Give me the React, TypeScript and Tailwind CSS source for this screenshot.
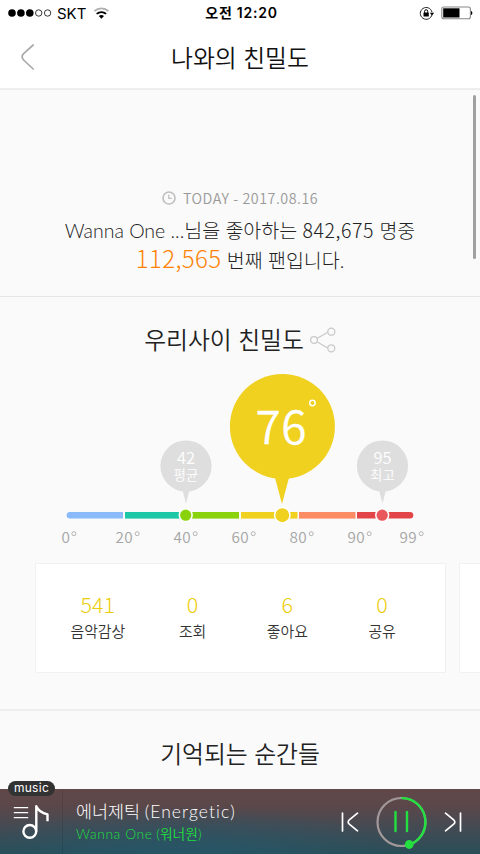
import type { ReactNode } from 'react';

interface TickProps {
  x: number;
  label: string;
}

interface BalloonProps {
  x: number;
  value: string;
  label: string;
}

const SEGMENTS = [
  { x: 125, width: 57, color: '#1cc7a7' },
  { x: 183, width: 56, color: '#8ad20b' },
  { x: 241, width: 56.5, color: '#f0d11f' },
  { x: 299, width: 56.5, color: '#fb8c64' },
];

const TICKS: TickProps[] = [
  { x: 61.5, label: '0' },
  { x: 115.5, label: '20' },
  { x: 173.5, label: '40' },
  { x: 231.5, label: '60' },
  { x: 289.5, label: '80' },
  { x: 347.5, label: '90' },
  { x: 399.5, label: '99' },
];

const STATS = [
  { value: '541', label: '음악감상' },
  { value: '0', label: '조회' },
  { value: '6', label: '좋아요' },
  { value: '0', label: '공유' },
];

function StatusBar() {
  return (
    <div className="grid h-[26px] grid-cols-3 items-center px-2 text-black">
      <div className="flex items-center">
        <svg width="44" height="10" viewBox="0 0 44 10">
          <circle cx="4" cy="5" r="3.8" />
          <circle cx="12.9" cy="5" r="3.8" />
          <circle cx="21.8" cy="5" r="3.8" />
          <circle cx="30.7" cy="5" r="3.2" fill="none" stroke="#222" strokeWidth="0.9" />
          <circle cx="39.6" cy="5" r="3.2" fill="none" stroke="#222" strokeWidth="0.9" />
        </svg>
        <span className="ml-[5px] font-['Inter',sans-serif] text-[15px] leading-none">SKT</span>
        <svg className="ml-[7px]" width="17" height="12" viewBox="0 0 17 12" fill="none">
          <path d="M1.3 4.2a10.3 10.3 0 0 1 14.2 0" stroke="#b0b0b0" strokeWidth="1.8" />
          <path d="M3.7 6.9a7 7 0 0 1 9.4 0" stroke="#000" strokeWidth="1.9" />
          <path d="M5.8 9a4 4 0 0 1 5.2 0L8.4 11.8z" fill="#000" />
        </svg>
      </div>
      <div className="pl-[3px] text-center font-['Inter','Noto_Sans_CJK_KR',sans-serif] text-[14px] leading-none font-semibold tracking-[0.75px] whitespace-nowrap">
        오전 12:20
      </div>
      <div className="flex items-center justify-end">
        <svg width="16" height="15" viewBox="0 0 16 15" fill="none">
          <path d="M13 8.6a5.9 5.9 0 1 1 0-2.4" stroke="#222" strokeWidth="1" />
          <path d="M10.8 6.8h4.4L13 9.4z" fill="#000" />
          <rect x="4.5" y="6.6" width="5.3" height="4" rx="0.4" fill="#000" />
          <path d="M5.6 7V5.3a1.55 1.55 0 0 1 3.1 0V7" stroke="#000" strokeWidth="1" />
        </svg>
        <svg className="-mr-px ml-[6px]" width="32" height="14" viewBox="0 0 32 14">
          <rect x="0.8" y="1" width="28.6" height="11.8" rx="2" fill="none" stroke="#888" strokeWidth="1.1" />
          <rect x="2.2" y="2.3" width="16.3" height="9.2" fill="#000" />
          <path d="M30 5c1.8.3 1.8 3.7 0 4z" fill="#000" />
        </svg>
      </div>
    </div>
  );
}

function Header() {
  return (
    <header className="h-[90px] shrink-0 border-b-2 border-[#eee] bg-white">
      <StatusBar />
      <div className="grid h-[62px] grid-cols-[60px_1fr_60px] items-center">
        <svg className="ml-[20px]" width="16" height="28" viewBox="0 0 16 28" fill="none">
          <path d="M13.2 2 3.6 10.7Q0.6 13.8 3.6 17L13.2 26" stroke="#aaa" strokeWidth="1.7" strokeLinecap="round" />
        </svg>
        <h1 className="pt-[3px] text-center text-[23.8px] leading-none font-[350] text-[#111]">나와의 친밀도</h1>
      </div>
    </header>
  );
}

function RankSummary() {
  return (
    <section className="flex h-[207px] shrink-0 flex-col items-center border-b border-[#e6e6e6] pt-[99px] text-[#222]">
      <div className="flex h-[18px] items-center gap-[7px] text-[#999]">
        <svg width="14" height="14" viewBox="0 0 14 14" fill="none" stroke="#c0c0c0" strokeWidth="1.7">
          <circle cx="7" cy="7" r="6" />
          <path d="M6.8 3.7v3.7h3" strokeWidth="1.3" />
        </svg>
        <span className="font-['Noto_Sans_CJK_KR',sans-serif] text-[14.3px] leading-none font-[350] tracking-[0.52px]">
          TODAY - 2017.08.16
        </span>
      </div>
      <p className="mt-[8px] h-[31px] text-[19.5px] leading-[30px] font-light whitespace-nowrap">
        Wanna One ...님을 좋아하는{' '}
        <span className="font-['Noto_Sans_CJK_KR',sans-serif] tracking-[0.6px]">842,675</span> 명중
      </p>
      <p className="h-[30px] text-[19.5px] leading-[29px] font-light whitespace-nowrap">
        <span className="font-['Noto_Sans_CJK_KR',sans-serif] text-[24px] leading-[20px] tracking-[0.4px] text-[#ff8205]">
          112,565
        </span>{' '}
        번째 팬입니다.
      </p>
    </section>
  );
}

function Balloon({ x, value, label }: BalloonProps) {
  return (
    <g fill="#dedede">
      <circle cx={x} cy="96" r="25.6" />
      <path d={`M${x - 4} 118h8L${x} 133.8z`} />
      <text x={x} y="93.5" textAnchor="middle" fontSize="16.5" fill="#fff">{value}</text>
      <text x={x} y="110" textAnchor="middle" fontSize="13.5" fill="#fff">{label}</text>
    </g>
  );
}

function Gauge() {
  return (
    <svg
      className="block font-['Noto_Sans_CJK_KR',sans-serif] font-[350]"
      width="480"
      height="182"
      viewBox="0 0 480 182"
    >
      <path d="M123 142H70a3.3 3.3 0 0 0 0 6.6h53z" fill="#8abafa" />
      {SEGMENTS.map((segment) => (
        <rect key={segment.x} x={segment.x} y="142" width={segment.width} height="6.6" fill={segment.color} />
      ))}
      <path d="M357 142h53a3.3 3.3 0 0 1 0 6.6h-53z" fill="#e14548" />

      <Balloon x={186} value="42" label="평균" />
      <Balloon x={382.5} value="95" label="최고" />

      <g fill="#f0d11f">
        <circle cx="282.4" cy="56.4" r="52.5" />
        <path d="M274.8 107h14.4L282 134z" />
      </g>
      <text x="281.3" y="73.7" textAnchor="middle" fontSize="46" letterSpacing="0.5" fill="#fff" stroke="#fff" strokeWidth="0.3">
        76
      </text>
      <circle cx="312.4" cy="33" r="2.7" fill="none" stroke="#fff" strokeWidth="1.5" />

      <g stroke="#fff" strokeWidth="1.5">
        <circle cx="185.7" cy="145.2" r="6.4" fill="#8ad20b" />
        <circle cx="282.3" cy="145.2" r="7.7" fill="#f0d11f" />
        <circle cx="382.2" cy="145.2" r="6.4" fill="#e8575b" />
      </g>

      {TICKS.map((tick) => (
        <g key={tick.x}>
          <text x={tick.x} y="173" fontSize="15.3" letterSpacing="0.3" fill="#a5a5a5">{tick.label}</text>
          <circle cx={tick.x + (tick.label === '0' ? 12.4 : 21.7)} cy="163.7" r="2" fill="none" stroke="#aaa" strokeWidth="0.9" />
        </g>
      ))}
    </svg>
  );
}

function Card({ children }: { children?: ReactNode }) {
  return (
    <div className="grid h-[110px] w-[411px] shrink-0 grid-cols-4 border-[1.5px] border-[#f1f1f1] bg-white px-[15px] pt-[29px]">
      {children}
    </div>
  );
}

function Intimacy() {
  return (
    <section className="h-[414px] shrink-0 overflow-hidden border-b-2 border-[#eee]">
      <div className="flex h-[73px] items-center justify-center gap-[6px] pt-[13px]">
        <h2 className="pt-[2px] text-[23.8px] leading-none font-[350] text-[#222]">우리사이 친밀도</h2>
        <svg width="26" height="26" viewBox="0 0 26 26" fill="none" stroke="#c9c9c9" strokeWidth="1.3">
          <path d="m7.3 11.2 10.5-6M7.3 15l10.5 6" />
          <circle cx="4" cy="13" r="3.4" />
          <circle cx="21.3" cy="4.7" r="3.5" />
          <circle cx="21.3" cy="21.3" r="3.5" />
        </svg>
      </div>
      <Gauge />
      <div className="mt-[11px] flex gap-[13px] pl-[35px]">
        <Card>
          {STATS.map((stat) => (
            <div key={stat.label} className="pr-px text-center font-['Noto_Sans_CJK_KR',sans-serif]">
              <div className="text-[21.5px] leading-[22px] font-light text-[#edcc0a]">{stat.value}</div>
              <div className="mt-[6px] text-[14.9px] leading-[20px] font-[350] text-[#333]">{stat.label}</div>
            </div>
          ))}
        </Card>
        <Card />
      </div>
    </section>
  );
}

function Player() {
  return (
    <footer className="relative flex h-[65px] shrink-0 items-center bg-[radial-gradient(ellipse_at_38%_115%,#25576a_0%,transparent_55%),linear-gradient(#614849_0%,#5b4749_25%,#424b54_62%,#294e57_100%)] text-white">
      <span className="absolute -top-[8px] left-[8px] flex h-[15px] w-[47px] items-center justify-center rounded-full bg-[#323232] pb-[1px] font-['Inter',sans-serif] text-[12px] leading-none tracking-[0.3px]">
        music
      </span>
      <div className="flex h-full w-[63px] shrink-0 items-center border-r border-black/10 pl-[13px]">
        <svg width="38" height="38" viewBox="0 0 38 38" fill="none" stroke="#fff" strokeLinejoin="round">
          <path d="M.8 4.6h14.4M.8 9.6h14.4M.8 14.6h14.4" strokeWidth="1.4" />
          <circle cx="16.8" cy="28.4" r="6.4" strokeWidth="2.4" />
          <path d="M23.3 28.4V3.2q2.6 6.2 11.2 8.2v6.8" strokeWidth="2.4" />
        </svg>
      </div>
      <div className="flex-1 pt-[2px] pl-[13px] font-light whitespace-nowrap">
        <div className="text-[17.4px] leading-[23px]">
          에너제틱 <span className="tracking-[1.1px]">(Energetic)</span>
        </div>
        <div className="text-[13.8px] leading-[22px] font-[350] text-[#21df3d]">
          <span className="tracking-[0.6px]">Wanna One</span> (워너원)
        </div>
      </div>
      <div className="flex items-center gap-[17px] pr-[18px]">
        <svg width="18" height="20" viewBox="0 0 18 20" fill="none" stroke="#fff" strokeWidth="1.7" strokeLinecap="round">
          <path d="M1.5 1v18M16.5 1.2 8.3 7.8Q6 10 8.3 12.2L16.5 18.8" />
        </svg>
        <svg width="51" height="54" viewBox="0 0 51 54" fill="none">
          <circle cx="25.5" cy="27" r="24" stroke="#a3999a" strokeWidth="2.2" />
          <path d="M25.5 3a24 24 0 0 1 8 46.6" stroke="#24df40" strokeWidth="2.4" />
          <circle cx="33.2" cy="49.5" r="4.4" fill="#24df40" />
          <path d="M19.5 17v19M31 17v19" stroke="#24df40" strokeWidth="2.4" strokeLinecap="round" />
        </svg>
        <svg width="18" height="20" viewBox="0 0 18 20" fill="none" stroke="#fff" strokeWidth="1.7" strokeLinecap="round">
          <path d="M16.5 1v18M1.5 1.2 9.7 7.8Q12 10 9.7 12.2L1.5 18.8" />
        </svg>
      </div>
    </footer>
  );
}

export default function App() {
  return (
    <div className="relative flex h-[854px] w-[480px] flex-col overflow-hidden bg-[#fafafa] font-['Lato','Noto_Sans_CJK_KR',sans-serif]">
      <Header />
      <RankSummary />
      <Intimacy />
      <section className="flex h-[78px] shrink-0 items-center justify-center pt-[9px]">
        <h2 className="text-[23.8px] leading-none font-[350] text-[#222]">기억되는 순간들</h2>
      </section>
      <Player />
      <div className="absolute top-[95px] right-[4px] h-[164px] w-[3px] rounded-full bg-[#a0a0a0]" />
    </div>
  );
}
